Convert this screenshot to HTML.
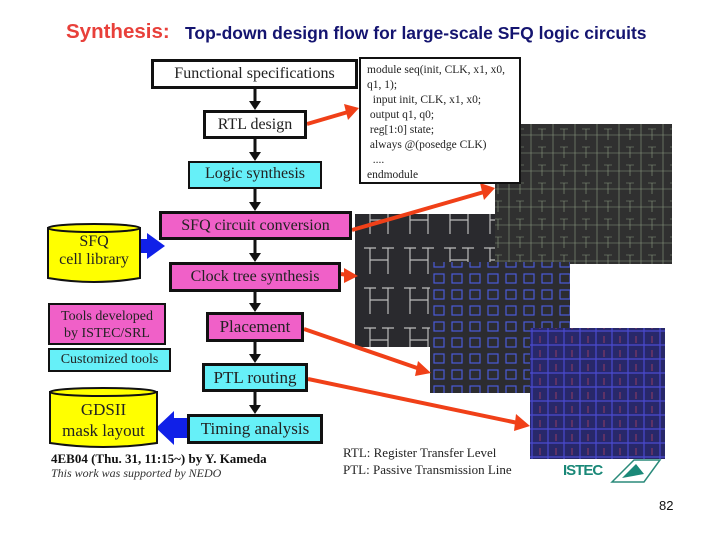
<!DOCTYPE html>
<html><head><meta charset="utf-8"><style>
body{margin:0;width:720px;height:540px;background:#fff;position:relative;overflow:hidden;font-family:"Liberation Serif",serif}
.b{position:absolute;box-sizing:border-box;border:3px solid #111;text-align:center;font-size:16px;color:#222;white-space:nowrap}
.m{background:#f060c8}.c{background:#66f0f8}.w{background:#fff}
.t{position:absolute;white-space:nowrap}
</style></head><body>
<div class="t" style="left:66px;top:20px;font:bold 20.5px 'Liberation Sans',sans-serif;color:#e8403a">Synthesis:</div>
<div class="t" style="left:185px;top:23px;font:bold 17.5px 'Liberation Sans',sans-serif;color:#141470">Top-down design flow for large-scale SFQ logic circuits</div>

<svg style="position:absolute;left:0;top:0" width="720" height="540">
<defs>
<pattern id="p1" width="22" height="18" patternUnits="userSpaceOnUse"><rect width="22" height="18" fill="#303030"/><path d="M3 0V18M0 9H22M14 3V14M10 3H18" stroke="#8a9a80" stroke-width="0.6" fill="none"/></pattern>
<pattern id="p2" width="40" height="40" patternUnits="userSpaceOnUse"><rect width="40" height="40" fill="#2a2a2e"/><path d="M10 8V34M28 8V34M10 20H28M4 8H16M22 8H34" stroke="#bbb" stroke-width="1.2" fill="none"/></pattern>
<pattern id="p3" width="18" height="16" patternUnits="userSpaceOnUse"><rect width="18" height="16" fill="#2c2c30"/><rect x="2" y="2" width="10" height="9" fill="none" stroke="#4a5ad8" stroke-width="1.2"/></pattern>
<pattern id="p4" width="16" height="14" patternUnits="userSpaceOnUse"><rect width="16" height="14" fill="#28286a"/><path d="M4 0V14M0 9H16" stroke="#4a4ad0" stroke-width="1.2"/><path d="M12 0V7" stroke="#b04060" stroke-width="0.8"/></pattern>
</defs>
<rect x="495" y="124" width="177" height="140" fill="url(#p1)"/>
<rect x="355" y="214" width="140" height="133" fill="url(#p2)"/>
<rect x="430" y="262" width="140" height="131" fill="url(#p3)"/>
<rect x="530" y="328" width="135" height="131" fill="url(#p4)"/>
<g stroke="#111" stroke-width="3" fill="#111">
<line x1="255" y1="89" x2="255" y2="104"/><line x1="255" y1="139" x2="255" y2="155"/><line x1="255" y1="189" x2="255" y2="205"/><line x1="255" y1="240" x2="255" y2="256"/><line x1="255" y1="292" x2="255" y2="306"/><line x1="255" y1="342" x2="255" y2="357"/><line x1="255" y1="392" x2="255" y2="408"/>
</g>
<g fill="#111">
<path d="M249 101h12l-6 9z"/><path d="M249 152h12l-6 9z"/><path d="M249 202h12l-6 9z"/><path d="M249 253h12l-6 9z"/><path d="M249 303h12l-6 9z"/><path d="M249 354h12l-6 9z"/><path d="M249 405h12l-6 9z"/>
</g>
<g stroke="#f04018" stroke-width="4" fill="#f04018">
<line x1="307" y1="124" x2="348" y2="112"/><line x1="352" y1="230" x2="484" y2="192"/><line x1="341" y1="274" x2="348" y2="275"/><line x1="304" y1="329" x2="420" y2="369"/><line x1="308" y1="379" x2="518" y2="423"/>
</g>
<g fill="#f04018">
<path d="M344 104l15 4-11 12z"/><path d="M480 183l15 5-11 12z"/><path d="M344 268l14 8-14 7z"/><path d="M418 361l13 12-16 3z"/><path d="M516 414l14 12-16 5z"/>
</g>
<path d="M135 239h12v-6l18 13-18 13v-6h-12z" fill="#1020e8"/>
<path d="M187 418h-13v-7l-18 17 18 17v-7h13z" fill="#1020e8"/>
<path d="M48 228v50q46 8 92 0v-50z" fill="#ffff00" stroke="#111" stroke-width="2"/>
<ellipse cx="94" cy="228" rx="46" ry="4" fill="#ffff00" stroke="#111" stroke-width="2"/>
<path d="M50 392v51q53 8 107 0v-51z" fill="#ffff00" stroke="#111" stroke-width="2"/>
<ellipse cx="103" cy="392" rx="53" ry="4" fill="#ffff00" stroke="#111" stroke-width="2"/>
<path d="M612 482l22-22h26l-16 22z" fill="none" stroke="#2a8a7a" stroke-width="1.5"/>
<path d="M622 478l14-14 8 10z" fill="#1a8878"/>
</svg>

<div class="b w" style="left:151px;top:59px;width:207px;height:30px;line-height:24px">Functional specifications</div>
<div class="b w" style="left:203px;top:110px;width:104px;height:29px;line-height:23px">RTL design</div>
<div class="b c" style="left:188px;top:161px;width:134px;height:28px;line-height:22px;border-width:2px">Logic synthesis</div>
<div class="b m" style="left:159px;top:211px;width:193px;height:29px;line-height:23px">SFQ circuit conversion</div>
<div class="b m" style="left:169px;top:262px;width:172px;height:30px;line-height:24px">Clock tree synthesis</div>
<div class="b m" style="left:206px;top:312px;width:98px;height:30px;line-height:24px;font-size:17px">Placement</div>
<div class="b c" style="left:202px;top:363px;width:106px;height:29px;line-height:23px;font-size:17px">PTL routing</div>
<div class="b c" style="left:187px;top:414px;width:136px;height:30px;line-height:24px;font-size:17px">Timing analysis</div>
<div class="b m" style="left:48px;top:303px;width:118px;height:42px;line-height:17px;font-size:14px;padding-top:3px;border-width:2px">Tools developed<br>by ISTEC/SRL</div>
<div class="b c" style="left:48px;top:348px;width:123px;height:24px;line-height:19px;font-size:14px;border-width:2px">Customized tools</div>
<div class="t" style="left:48px;top:233px;width:92px;text-align:center;font-size:16px;line-height:18px;color:#222">SFQ<br>cell library</div>
<div class="t" style="left:50px;top:399px;width:107px;text-align:center;font-size:17px;line-height:21px;color:#222">GDSII<br>mask layout</div>
<div class="b w" style="left:359px;top:57px;width:162px;height:127px;text-align:left;font-size:11.5px;line-height:15px;padding:4px 0 0 6px;border-width:2px">module seq(init, CLK, x1, x0,<br>q1, 1);<br>&nbsp;&nbsp;input init, CLK, x1, x0;<br>&nbsp;output q1, q0;<br>&nbsp;reg[1:0] state;<br>&nbsp;always @(posedge CLK)<br>&nbsp;&nbsp;....<br>endmodule</div>
<div class="t" style="left:51px;top:451px;font-size:13px;font-weight:bold;color:#111">4EB04 (Thu. 31, 11:15~) by Y. Kameda</div>
<div class="t" style="left:51px;top:466px;font-size:12px;font-style:italic;color:#333">This work was supported by NEDO</div>
<div class="t" style="left:343px;top:444px;font-size:13px;line-height:17px;color:#222">RTL: Register Transfer Level<br>PTL: Passive Transmission Line</div>
<div class="t" style="left:563px;top:462px;font:bold 15px 'Liberation Sans',sans-serif;color:#1a8878;letter-spacing:-1px">ISTEC</div>
<div class="t" style="left:659px;top:498px;font:13px 'Liberation Sans',sans-serif;color:#111">82</div>
</body></html>
